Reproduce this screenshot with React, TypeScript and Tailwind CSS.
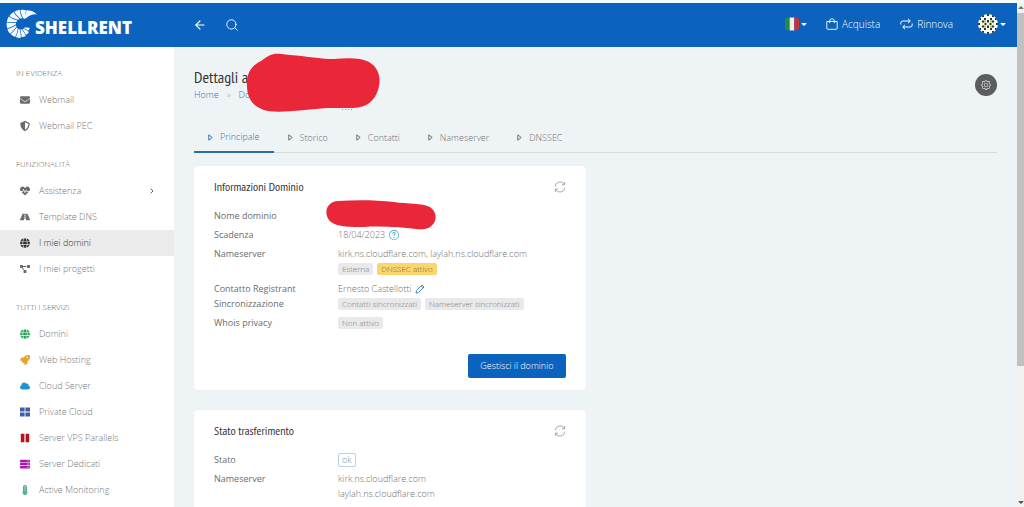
import type { ReactNode } from 'react';
import type { IconType } from 'react-icons';
import {
  FaEnvelope,
  FaShieldAlt,
  FaHeartbeat,
  FaRoad,
  FaGlobe,
  FaProjectDiagram,
  FaRocket,
  FaCloud,
  FaServer,
  FaThermometerFull,
} from 'react-icons/fa';
import { FaCaretDown, FaCaretUp } from 'react-icons/fa6';
import { BsQuestionCircle, BsGear } from 'react-icons/bs';
import { ArrowLeft, Search, ChevronRight } from 'lucide-react';

const TilesIcon = ({ className }: { className?: string }) => (
  <svg viewBox="0 0 10 10" className={className} fill="currentColor" aria-hidden="true">
    <path d="M0 .5h4.600v4.100H0zM5.400.5H10v4.100H5.400zM0 5.400h4.600v4.100H0zM5.400 5.400H10v4.100H5.400z" />
  </svg>
);

const BarsIcon = ({ className }: { className?: string }) => (
  <svg viewBox="0 0 10 10" className={className} fill="currentColor" aria-hidden="true">
    <path d="M.8.8h3.600v8.400H.8zM5.600.8h3.600v8.400H5.600z" />
  </svg>
);

type Item = {
  label: string;
  icon: IconType | typeof TilesIcon;
  color?: string;
  active?: boolean;
  expandable?: boolean;
};

const sections: { title: string; items: Item[] }[] = [
  {
    title: 'IN EVIDENZA',
    items: [
      { label: 'Webmail', icon: FaEnvelope },
      { label: 'Webmail PEC', icon: FaShieldAlt },
    ],
  },
  {
    title: 'FUNZIONALITÀ',
    items: [
      { label: 'Assistenza', icon: FaHeartbeat, expandable: true },
      { label: 'Template DNS', icon: FaRoad },
      { label: 'I miei domini', icon: FaGlobe, active: true },
      { label: 'I miei progetti', icon: FaProjectDiagram },
    ],
  },
  {
    title: 'TUTTI I SERVIZI',
    items: [
      { label: 'Domini', icon: FaGlobe, color: 'text-[#22a84e]' },
      { label: 'Web Hosting', icon: FaRocket, color: 'text-[#eba12a]' },
      { label: 'Cloud Server', icon: FaCloud, color: 'text-[#1d95d3]' },
      { label: 'Private Cloud', icon: TilesIcon, color: 'text-[#3f5fa8]' },
      { label: 'Server VPS Parallels', icon: BarsIcon, color: 'text-[#b5121f]' },
      { label: 'Server Dedicati', icon: FaServer, color: 'text-[#a81ab0]' },
      { label: 'Active Monitoring', icon: FaThermometerFull, color: 'text-[#3f9f86]' },
    ],
  },
];

// The shell is a fan of curved plates that shrink along a spiral.
const PLATES = 11;
const polar = (radius: number, degrees: number) => {
  const a = (degrees * Math.PI) / 180;
  return `${(15.5 + radius * Math.cos(a)).toFixed(2)} ${(16 - radius * Math.sin(a)).toFixed(2)}`;
};
const plates = Array.from({ length: PLATES }, (_, i) => {
  const t = i / (PLATES - 1);
  const start = 72 + 25 * i - 3 * t;
  const end = start + 22;
  const outer = 15.4 - 6.5 * t * t * t;
  const inner = 7 - 3 * t;
  const mid = (outer + inner) / 2;
  return `M${polar(outer, start)}Q${polar(outer + 0.4, (start + end) / 2)} ${polar(outer - 0.3, end)}Q${polar(mid + 1, end + 1)} ${polar(inner, end - 18)}L${polar(inner, start - 14)}Q${polar(mid + 1, start + 2)} ${polar(outer, start)}Z`;
});

function ShellLogo() {
  return (
    <svg viewBox="0 0 32 32" className="size-8" aria-hidden="true">
      <g fill="#f4fbff">
        <path d="M20.500 1.200Q27 1.300 31 5.500Q25 4.700 20.500 9L17.800 9.300Q19.800 5 20.500 1.200Z" />
        {plates.map((d) => (
          <path key={d} d={d} />
        ))}
      </g>
    </svg>
  );
}

function ItalianFlag() {
  return (
    <svg viewBox="0 0 14 14" className="size-3.5" role="img" aria-label="Italiano">
      <path fill="#278a4a" d="M0 1.500L4.700.5v13L0 12.500z" />
      <path fill="#f1f1ee" d="M4.700.5h4.600v13H4.700z" />
      <path fill="#c4343c" d="M9.300.5L14 1.500v11l-4.700 1z" />
    </svg>
  );
}

function Avatar() {
  return (
    <svg viewBox="0 0 20 20" className="size-5" role="img" aria-label="Account">
      <defs>
        <clipPath id="avatar-round">
          <circle cx="10" cy="10" r="10" />
        </clipPath>
      </defs>
      <g clipPath="url(#avatar-round)">
        <path fill="#fbfcf4" d="M0 0h20v20H0z" />
        <path
          fill="#26382c"
          d="M4 1h2v2H4zM9 0h2v2H9zM14 1h2v2h-2zM1 4h2v2H1zM6 4h2v2H6zM12 4h2v2h-2zM17 4h2v2h-2zM4 6.500h2v2H4zM9 6h2v2.500H9zM14 6.500h2v2h-2zM0 9h2v2H0zM6.500 9h2v2h-2zM11.500 9h2v2h-2zM18 9h2v2h-2zM4 11.500h2v2H4zM9 11.500h2V14H9zM14 11.500h2v2h-2zM1 14h2v2H1zM6 14h2v2H6zM12 14h2v2h-2zM17 14h2v2h-2zM4 17h2v2H4zM9 18h2v2H9zM14 17h2v2h-2z"
        />
        <path fill="#a9c33f" d="M6 6.500h2v2H6zM12 6.500h2v2h-2zM6 11.500h2v2H6zM12 11.500h2v2h-2z" />
      </g>
    </svg>
  );
}

const BagIcon = () => (
  <svg viewBox="0 0 12 12" className="size-3" fill="none" stroke="currentColor" strokeWidth="0.9" aria-hidden="true">
    <path d="M.8 3.500h10.400v6.800a1 1 0 0 1-1 1H1.800a1 1 0 0 1-1-1zM3.600 5.200V3.200a2.400 2.400 0 0 1 4.800 0v2" />
  </svg>
);

const RenewIcon = () => (
  <svg viewBox="0 0 13 12" className="h-3 w-[13px]" fill="none" stroke="currentColor" strokeWidth="1" aria-hidden="true">
    <path d="M.8 6.500V5a2 2 0 0 1 2-2h7M8 .8L10.300 3 8 5.200M12.200 5.500V7a2 2 0 0 1-2 2h-7M5 6.800L2.700 9 5 11.200" />
  </svg>
);

const RefreshIcon = () => (
  <svg viewBox="0 0 12 12" className="size-3" fill="none" stroke="#8f9497" strokeWidth="0.8" aria-hidden="true">
    <path d="M1.200 5.400A4.800 4.800 0 0 1 10.300 3.600M10.600 1v2.800H7.900M10.800 6.600A4.800 4.800 0 0 1 1.700 8.400M1.400 11V8.200h2.700" />
  </svg>
);

const PencilIcon = () => (
  <svg viewBox="0 0 10 10" className="size-2.5" fill="none" stroke="#3b7dbb" strokeWidth="0.9" aria-hidden="true">
    <path d="M1 9l.6-2.600L7 1l2 2-5.400 5.400zM5.900 2.100l2 2" />
  </svg>
);

const TriangleIcon = () => (
  <svg viewBox="0 0 5 7" className="h-[7px] w-[5px]" fill="none" stroke="currentColor" strokeWidth="1" aria-hidden="true">
    <path d="M.8.8L4.200 3.500.8 6.200z" />
  </svg>
);

const Tag = ({ children, highlight }: { children: ReactNode; highlight?: boolean }) => (
  <span
    className={
      highlight
        ? 'rounded-xs bg-[#fbd66e] px-1 text-[8px] leading-3 text-[#77642f]'
        : 'rounded-xs bg-[#e9e9e9] px-1 text-[8px] leading-3 text-[#7b7b7b]'
    }
  >
    {children}
  </span>
);

const Field = ({ label, tight, children }: { label: string; tight?: boolean; children: ReactNode }) => (
  <div className={tight ? 'flex' : 'flex pb-1'}>
    <dt className="w-[124px] shrink-0 text-[#6b6b6b]">{label}</dt>
    <dd className="min-w-0 flex-1 font-light text-[#6f6f6f]">{children}</dd>
  </div>
);

const Card = ({ title, children }: { title: string; children: ReactNode }) => (
  <section className="rounded-sm bg-white px-5 pt-3 pb-3 shadow-[0_0_2px_rgba(0,0,0,0.06)]">
    <div className="flex h-[18px] items-center justify-between">
      <h2 className="font-['PT_Sans_Narrow','Liberation_Sans_Narrow',sans-serif] text-xs text-[#333]">{title}</h2>
      <button type="button" aria-label="Aggiorna">
        <RefreshIcon />
      </button>
    </div>
    {children}
  </section>
);

const tabs = ['Principale', 'Storico', 'Contatti', 'Nameserver', 'DNSSEC'];

export default function App() {
  return (
    <div className="flex h-screen flex-col overflow-hidden border-t-[3px] border-[#f7fbfc] bg-[#eef3f5] font-['Open_Sans',sans-serif] text-[9px]">
      <div className="flex min-h-0 flex-1">
        <div className="flex min-w-0 flex-1 flex-col">
          <header className="flex h-11 shrink-0 items-center bg-[#0b63bd] text-[10px] text-white">
            <a href="#" className="flex w-[193px] shrink-0 items-center pl-1.5" aria-label="Shellrent">
              <ShellLogo />
              <span className="-ml-[3px] pt-1.5 text-[17px] leading-5 font-extrabold">SHELLRENT</span>
            </a>
            <button type="button" aria-label="Indietro">
              <ArrowLeft className="size-3.5" strokeWidth={2} />
            </button>
            <button type="button" aria-label="Cerca" className="ml-[18px]">
              <Search className="size-3.5" strokeWidth={1.5} />
            </button>
            <nav className="ml-auto flex items-center pr-2.5 pb-0.5 font-light">
              <button type="button" className="flex items-center gap-px">
                <ItalianFlag />
                <FaCaretDown className="size-2" />
              </button>
              <a href="#" className="ml-[18px] flex items-center gap-1">
                <BagIcon />
                Acquista
              </a>
              <a href="#" className="ml-5 flex items-center gap-1">
                <RenewIcon />
                Rinnova
              </a>
              <button type="button" className="ml-[25px] flex items-center gap-px">
                <Avatar />
                <FaCaretDown className="size-2" />
              </button>
            </nav>
          </header>

          <div className="flex min-h-0 flex-1">
            <aside className="w-[174px] shrink-0 overflow-hidden bg-white pt-[13px] font-light">
              {sections.map((s) => (
                <section key={s.title} className="mb-3">
                  <h3 className="pb-0.5 pl-4 text-[8px] leading-[25px] text-[#5f5f5f]">{s.title}</h3>
                  <ul>
                    {s.items.map(({ label, icon: Icon, color, active, expandable }) => (
                      <li key={label}>
                        <a
                          href="#"
                          className={
                            active
                              ? 'flex h-[26px] items-center bg-[#ebebeb] pr-[18px] pl-5 text-[#333]'
                              : 'flex h-[26px] items-center pr-[18px] pl-5 text-[#757575]'
                          }
                        >
                          <span className={color ?? (active ? 'text-[#333]' : 'text-[#6b6b6b]')}>
                            <Icon className="size-2.5" />
                          </span>
                          <span className="ml-[9px] flex-1">{label}</span>
                          {expandable && <ChevronRight className="size-2 text-[#666]" strokeWidth={3} />}
                        </a>
                      </li>
                    ))}
                  </ul>
                </section>
              ))}
            </aside>

            <main className="min-w-0 flex-1 px-5">
              <div className="flex items-center justify-between pt-5">
                <div className="relative">
                  <h1 className="font-['PT_Sans_Narrow','Liberation_Sans_Narrow',sans-serif] text-base leading-5 text-[#333]">
                    Dettagli a
                  </h1>
                  <p className="flex gap-2 leading-4 font-light">
                    <a href="#" className="text-[#2b75b5]">Home</a>
                    <span className="text-[#999]">»</span>
                    <a href="#" className="text-[#2b75b5]">Domini</a>
                  </p>
                  <svg viewBox="0 0 134 60" className="absolute -top-3.5 left-[52px] h-[60px] w-[134px]" aria-hidden="true">
                    <path
                      fill="#ea2639"
                      d="M28 1C34 0 40 2 50 2.500C65 4 75 6 88 6C100 5 114 4 123 9C132 14 135 24 133 33C131 44 124 53 112 54.500C100 56 90 54 75 55.500C55 57 38 60 22 58C7 55 1 45 1 33C0 19 7 12 15 8C19 5 23 2 28 1Z"
                    />
                    <path stroke="#8d9a9f" strokeWidth="1" strokeDasharray="1 2" d="M96 56.500h12" />
                  </svg>
                </div>
                <button
                  type="button"
                  aria-label="Impostazioni"
                  className="flex size-[22px] items-center justify-center rounded-full bg-[#5b5e60] text-[#e2e2e2]"
                >
                  <BsGear className="size-2.5" />
                </button>
              </div>

              <nav className="mt-5 flex border-b border-[#d5dadd] font-light">
                {tabs.map((t, i) => (
                  <a
                    key={t}
                    href="#"
                    className={
                      i === 0
                        ? '-mb-px flex h-[30px] items-center gap-[7px] border-b-2 border-[#2b6fa8] px-3.5 text-[#2b75b5]'
                        : 'flex h-[29px] items-center gap-[7px] px-3.5 text-[#707070]'
                    }
                  >
                    <TriangleIcon />
                    {t}
                  </a>
                ))}
              </nav>

              <div className="mt-[13px] grid grid-cols-2 gap-5">
                <div className="grid gap-5">
                  <Card title="Informazioni Dominio">
                    <dl className="pt-3 leading-[15px]">
                      <Field label="Nome dominio">
                        <svg viewBox="0 0 110 30" className="absolute -mt-2 -ml-3 h-[30px] w-[110px]" aria-hidden="true">
                          <path
                            fill="#ea2639"
                            d="M12 1C30 0 50 0 68 2C82 4 96 3 104 7C110 11 111 18 108 23C104 29 98 30 90 29C75 27 55 26 38 27C25 27 12 27 5 22C-1 17-1 8 4 4C6 2 9 1 12 1Z"
                          />
                        </svg>
                      </Field>
                      <Field label="Scadenza">
                        <span className="flex items-center gap-1">
                          18/04/2023
                          <BsQuestionCircle className="size-2.5 text-[#2ba3bd]" />
                        </span>
                      </Field>
                      <Field label="Nameserver">
                        kirk.ns.cloudflare.com, laylah.ns.cloudflare.com
                        <div className="flex h-4 items-center gap-1">
                          <Tag>Esterna</Tag>
                          <Tag highlight>DNSSEC attivo</Tag>
                        </div>
                      </Field>
                      <Field label="Contatto Registrant" tight>
                        <span className="flex items-center gap-1">
                          Ernesto Castellotti
                          <PencilIcon />
                        </span>
                      </Field>
                      <Field label="Sincronizzazione">
                        <div className="flex h-[15px] items-center gap-1">
                          <Tag>Contatti sincronizzati</Tag>
                          <Tag>Nameserver sincronizzati</Tag>
                        </div>
                      </Field>
                      <Field label="Whois privacy">
                        <div className="flex h-[15px] items-center">
                          <Tag>Non attivo</Tag>
                        </div>
                      </Field>
                    </dl>
                    <div className="flex justify-end pt-5">
                      <button type="button" className="h-6 rounded-xs bg-[#0b63bd] px-3 font-light text-white">
                        Gestisci il dominio
                      </button>
                    </div>
                  </Card>

                  <Card title="Stato trasferimento">
                    <dl className="pt-3 leading-[15px]">
                      <Field label="Stato">
                        <div className="flex h-[15px] items-center">
                          <span className="rounded-xs border border-[#b7d3e2] px-[3px] leading-3 text-[#6c93ad]">ok</span>
                        </div>
                      </Field>
                      <Field label="Nameserver">
                        kirk.ns.cloudflare.com
                        <br />
                        laylah.ns.cloudflare.com
                      </Field>
                    </dl>
                  </Card>
                </div>
              </div>
            </main>
          </div>
        </div>

        <div className="flex w-[7px] shrink-0 flex-col items-center bg-[#f1f1f1]" aria-hidden="true">
          <FaCaretUp className="my-px size-2 text-[#777]" />
          <div className="w-full flex-1">
            <div className="h-[73%] w-full bg-[#c1c1c1]" />
          </div>
          <FaCaretDown className="my-px size-2 text-[#555]" />
        </div>
      </div>
    </div>
  );
}
